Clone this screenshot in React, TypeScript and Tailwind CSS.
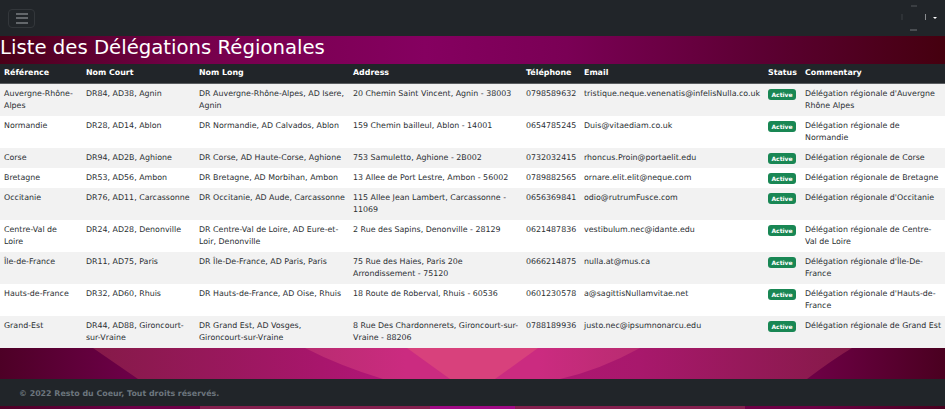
const rows = [
  ["Auvergne-Rhône-Alpes", "DR84, AD38, Agnin", "DR Auvergne-Rhône-Alpes, AD Isere, Agnin", "20 Chemin Saint Vincent, Agnin - 38003", "0798589632", "tristique.neque.venenatis@infelisNulla.co.uk", "Délégation régionale d'Auvergne Rhône Alpes"],
  ["Normandie", "DR28, AD14, Ablon", "DR Normandie, AD Calvados, Ablon", "159 Chemin bailleul, Ablon - 14001", "0654785245", "Duis@vitaediam.co.uk", "Délégation régionale de Normandie"],
  ["Corse", "DR94, AD2B, Aghione", "DR Corse, AD Haute-Corse, Aghione", "753 Samuletto, Aghione - 2B002", "0732032415", "rhoncus.Proin@portaelit.edu", "Délégation régionale de Corse"],
  ["Bretagne", "DR53, AD56, Ambon", "DR Bretagne, AD Morbihan, Ambon", "13 Allee de Port Lestre, Ambon - 56002", "0789882565", "ornare.elit.elit@neque.com", "Délégation régionale de Bretagne"],
  ["Occitanie", "DR76, AD11, Carcassonne", "DR Occitanie, AD Aude, Carcassonne", "115 Allee Jean Lambert, Carcassonne - 11069", "0656369841", "odio@rutrumFusce.com", "Délégation régionale d'Occitanie"],
  ["Centre-Val de Loire", "DR24, AD28, Denonville", "DR Centre-Val de Loire, AD Eure-et-Loir, Denonville", "2 Rue des Sapins, Denonville - 28129", "0621487836", "vestibulum.nec@idante.edu", "Délégation régionale de Centre-Val de Loire"],
  ["Île-de-France", "DR11, AD75, Paris", "DR Île-De-France, AD Paris, Paris", "75 Rue des Haies, Paris 20e Arrondissement - 75120", "0666214875", "nulla.at@mus.ca", "Délégation régionale d'Île-De-France"],
  ["Hauts-de-France", "DR32, AD60, Rhuis", "DR Hauts-de-France, AD Oise, Rhuis", "18 Route de Roberval, Rhuis - 60536", "0601230578", "a@sagittisNullamvitae.net", "Délégation régionale d'Hauts-de-France"],
  ["Grand-Est", "DR44, AD88, Gironcourt-sur-Vraine", "DR Grand Est, AD Vosges, Gironcourt-sur-Vraine", "8 Rue Des Chardonnerets, Gironcourt-sur-Vraine - 88206", "0788189936", "justo.nec@ipsumnonarcu.edu", "Délégation régionale de Grand Est"],
];

const heads = ["Référence", "Nom Court", "Nom Long", "Address", "Téléphone", "Email", "Status", "Commentary"];

// background artwork behind the bottom of the page
function Waves() {
  return (
    <svg className="absolute inset-0 h-full w-full" viewBox="0 0 945 61" preserveAspectRatio="none">
      <defs>
        <linearGradient id="outer" x1="0" x2="1" y1="0" y2="0">
          <stop offset="0" stopColor="#4d0026" />
          <stop offset="0.14" stopColor="#6d0048" />
          <stop offset="0.86" stopColor="#6d0045" />
          <stop offset="1" stopColor="#4a0020" />
        </linearGradient>
        <linearGradient id="mid" x1="93" x2="852" y1="0" y2="0" gradientUnits="userSpaceOnUse">
          <stop offset="0" stopColor="#851a48" />
          <stop offset="0.3" stopColor="#a8166c" />
          <stop offset="0.42" stopColor="#b5157c" />
          <stop offset="0.72" stopColor="#a8186c" />
          <stop offset="1" stopColor="#851a48" />
        </linearGradient>
        <linearGradient id="light" x1="305" x2="640" y1="0" y2="0" gradientUnits="userSpaceOnUse">
          <stop offset="0" stopColor="#b82c70" />
          <stop offset="0.3" stopColor="#cb2b80" />
          <stop offset="0.7" stopColor="#cb2b80" />
          <stop offset="1" stopColor="#b82c70" />
        </linearGradient>
      </defs>
      <rect width="945" height="61" fill="url(#outer)" />
      <path d="M93 0 L138 31 L807 31 Q832 12 852 0 Z" fill="url(#mid)" />
      <path d="M305 0 Q340 18 383 31 L560 31 Q600 22 640 0 Z" fill="url(#light)" />
      <path d="M407 0 L450 31 L495 31 L538 0 Z" fill="#d8417c" />
      <rect x="200" y="58" width="230" height="3" fill="#85204f" />
      <rect x="430" y="58" width="85" height="3" fill="#a00a85" />
      <rect x="515" y="58" width="230" height="3" fill="#85204f" />
    </svg>
  );
}

export default function App() {
  return (
    <div className="relative h-[409px] w-[945px] overflow-hidden font-['DejaVu_Sans',sans-serif]">
      <div className="absolute inset-x-0 bottom-0 h-[61px]">
        <Waves />
      </div>
      <div className="relative">
        <nav className="flex h-9 items-center justify-between bg-[#212529] pl-2 pr-2">
          <div className="flex h-[19px] w-[27px] items-center justify-center rounded-sm border border-[#33373b]">
            <div className="flex w-3 flex-col gap-[2.5px]">
              <span className="h-0.5 bg-[#63676b]" />
              <span className="h-0.5 bg-[#63676b]" />
              <span className="h-0.5 bg-[#63676b]" />
            </div>
          </div>
          <div className="flex items-center gap-1.5">
            <svg width="26" height="26" viewBox="0 0 26 26">
              <path d="M1 9v6" stroke="#3c4044" />
              <path d="M24.5 9v6" stroke="#8a8d90" />
              <path d="M10 1h6" stroke="#55595c" />
              <path d="M9 25h7" stroke="#73767a" />
            </svg>
            <span className="h-0 w-0 border-x-2 border-t-2 border-x-transparent border-t-white" />
          </div>
        </nav>
        <h1 className="h-7 bg-[linear-gradient(90deg,#4a0018_0%,#75004a_20%,#850060_45%,#7a0055_60%,#5a0030_82%,#45000f_100%)] text-[19.7px] leading-[24px] font-normal text-white">
          Liste des Délégations Régionales
        </h1>
        <table className="w-[945px] table-fixed border-collapse text-[7.9px] leading-[12px] text-[#2b2f33]">
          <colgroup>
            <col className="w-[82px]" />
            <col className="w-[113px]" />
            <col className="w-[154px]" />
            <col className="w-[173px]" />
            <col className="w-[58px]" />
            <col className="w-[184px]" />
            <col className="w-[37px]" />
            <col className="w-[144px]" />
          </colgroup>
          <thead>
            <tr className="h-[19px] bg-[#212529] text-white">
              {heads.map((h) => (
                <th key={h} className="border-b border-[#5a5d60] px-1 text-left font-bold whitespace-nowrap">{h}</th>
              ))}
            </tr>
          </thead>
          <tbody>
            {rows.map((r, i) => (
              <tr key={r[0]} className={i % 2 === 0 ? "bg-[#f2f2f2]" : "bg-white"}>
                {r.slice(0, 6).map((c, j) => (
                  <td key={j} className={j === 3 ? "py-1 pr-0.5 pl-1 align-top" : "px-1 py-1 align-top"}>{c}</td>
                ))}
                <td className="px-1 py-1 align-top">
                  <span className="mt-px block h-[11px] w-[28px] rounded-[3px] bg-[#198754] text-center text-[6px] leading-[11px] font-bold text-white">Active</span>
                </td>
                <td className="py-1 pr-[3px] pl-1 align-top">{r[6]}</td>
              </tr>
            ))}
          </tbody>
        </table>
        <footer className="mt-[31px] flex h-[27px] items-center bg-[#212529] pt-[3px] pl-[19px] text-[7.9px] font-bold text-[#6c757d]">
          © 2022 Resto du Coeur, Tout droits réservés.
        </footer>
      </div>
    </div>
  );
}
